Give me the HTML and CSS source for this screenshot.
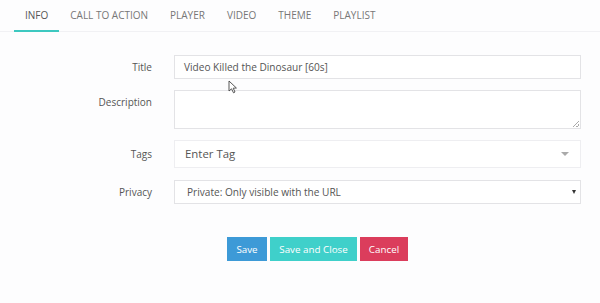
FILE: index.html
```html
<!DOCTYPE html>
<html>
<head>
<meta charset="utf-8">
<link rel="stylesheet" href="styles.css">
</head>
<body>
<div class="tabs">
  <div class="tab active">INFO</div>
  <div class="tab">CALL TO ACTION</div>
  <div class="tab">PLAYER</div>
  <div class="tab">VIDEO</div>
  <div class="tab">THEME</div>
  <div class="tab">PLAYLIST</div>
</div>
<div class="form">
  <div class="row r-title">
    <label class="lbl">Title</label>
    <div class="field input">Video Killed the Dinosaur [60s]</div>
  </div>
  <div class="row r-desc">
    <label class="lbl top">Description</label>
    <div class="field textarea"><span class="grip"></span></div>
  </div>
  <div class="row r-tags">
    <label class="lbl">Tags</label>
    <div class="field tags">Enter Tag<span class="caret-soft"></span></div>
  </div>
  <div class="row r-priv">
    <label class="lbl">Privacy</label>
    <div class="field select">Private: Only visible with the URL<span class="caret"></span></div>
  </div>
  <div class="actions">
    <button class="btn save">Save</button>
    <button class="btn close">Save and Close</button>
    <button class="btn cancel">Cancel</button>
  </div>
</div>
<svg class="cursor" width="10" height="14" viewBox="0 0 10 14"><path d="M1 1 L1 11 L3.5 8.8 L5.5 12.8 L7 12 L5.2 8.2 L8.4 8 Z" fill="#fff" stroke="#444" stroke-width="0.9"/></svg>
</body>
</html>
```
FILE: styles.css
```css
html, body { margin: 0; padding: 0; background: #fdfdfe; }
body { font-family: "Open Sans", "Liberation Sans", sans-serif; color: #555; position: relative; width: 600px; height: 303px; overflow: hidden; }
.tabs { display: flex; padding-left: 14px; height: 32px; border-bottom: 1px solid #f1f1f4; box-sizing: border-box; }
.tab { padding: 0 11px; font-size: 10px; line-height: 30px; color: #777; height: 32px; box-sizing: border-box; }
.tab.active { color: #555; border-bottom: 2px solid #3dc8c0; }
.form { padding-top: 23px; }
.row { display: flex; align-items: center; margin-bottom: 11px; }
.lbl { width: 174px; text-align: right; padding-right: 22px; font-size: 10px; color: #555; box-sizing: border-box; flex: none; }
.lbl.top { align-self: flex-start; padding-top: 5px; }
.field { width: 407px; box-sizing: border-box; border: 1px solid #e3e3e6; background: #fff; position: relative; }
.input { height: 24px; font-size: 10.1px; line-height: 22px; padding-left: 9px; color: #555; }
.textarea { height: 39px; }
.grip { position: absolute; right: 1px; bottom: 1px; width: 6px; height: 6px; background: linear-gradient(135deg, transparent 45%, #aaa 45%, #aaa 55%, transparent 55%, transparent 75%, #aaa 75%, #aaa 85%, transparent 85%); }
.r-tags { margin-bottom: 12px; margin-top: 1px; }
.tags { height: 28px; border-color: #eeeef1; font-size: 11.4px; line-height: 26px; padding-left: 10px; color: #555; }
.caret-soft { position: absolute; right: 11px; top: 11px; border-left: 4px solid transparent; border-right: 4px solid transparent; border-top: 4px solid #aaa; }
.select { height: 24px; font-size: 10.1px; line-height: 22px; padding-left: 12px; color: #555; }
.caret { position: absolute; right: 4px; top: 9px; border-left: 2.5px solid transparent; border-right: 2.5px solid transparent; border-top: 4px solid #333; }
.actions { display: flex; justify-content: center; gap: 3px; padding-left: 35px; margin-top: 33px; }
.btn { border: none; height: 24px; font-family: "Open Sans", "Liberation Sans", sans-serif; font-size: 9.8px; color: #fff; padding: 0; margin: 0; cursor: pointer; }
.save { background: #3d9ad7; width: 40px; }
.close { background: #3fd0ca; width: 87px; }
.cancel { background: #db3d5c; width: 48px; }
.cursor { position: absolute; left: 228px; top: 80px; }
```
